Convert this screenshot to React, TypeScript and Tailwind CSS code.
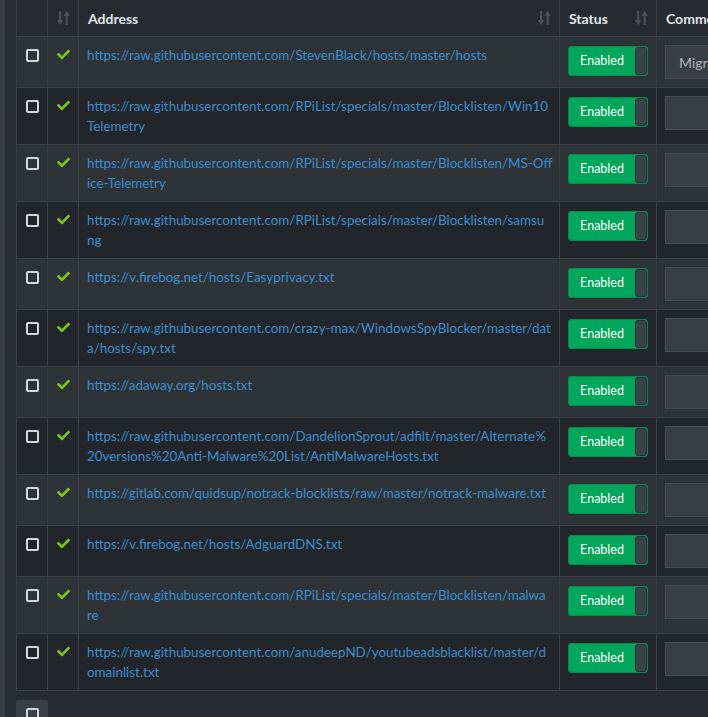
import React from "react";
import { FaCheck } from "react-icons/fa";

type Row = { lines: string[]; comment?: string };

const rows: Row[] = [
  { lines: ["https://raw.githubusercontent.com/StevenBlack/hosts/master/hosts"], comment: "Migrated from /etc/pihole/adlists.list" },
  { lines: ["https://raw.githubusercontent.com/RPiList/specials/master/Blocklisten/Win10", "Telemetry"] },
  { lines: ["https://raw.githubusercontent.com/RPiList/specials/master/Blocklisten/MS-Off", "ice-Telemetry"] },
  { lines: ["https://raw.githubusercontent.com/RPiList/specials/master/Blocklisten/samsu", "ng"] },
  { lines: ["https://v.firebog.net/hosts/Easyprivacy.txt"] },
  { lines: ["https://raw.githubusercontent.com/crazy-max/WindowsSpyBlocker/master/dat", "a/hosts/spy.txt"] },
  { lines: ["https://adaway.org/hosts.txt"] },
  { lines: ["https://raw.githubusercontent.com/DandelionSprout/adfilt/master/Alternate%", "20versions%20Anti-Malware%20List/AntiMalwareHosts.txt"] },
  { lines: ["https://gitlab.com/quidsup/notrack-blocklists/raw/master/notrack-malware.txt"] },
  { lines: ["https://v.firebog.net/hosts/AdguardDNS.txt"] },
  { lines: ["https://raw.githubusercontent.com/RPiList/specials/master/Blocklisten/malwa", "re"] },
  { lines: ["https://raw.githubusercontent.com/anudeepND/youtubeadsblacklist/master/d", "omainlist.txt"] },
];

const cols = "grid grid-cols-[31px_31px_481px_97px_200px]";
const cell = "border-r border-[#3a3f45]";

function SortIcon() {
  return (
    <svg width="13" height="16" viewBox="0 0 13 16" fill="#4b5158">
      <path d="M2 1h2.2v9H6.2L3.1 15 0 10h2z" />
      <path d="M10.8 15H8.6V6H6.6L9.7 1l3.1 5h-2z" />
    </svg>
  );
}

function Checkbox() {
  return <div className="w-[13px] h-[13px] border-2 border-[#d3d8dd] rounded-[2px]" />;
}

function Toggle() {
  return (
    <div className="mt-px flex h-[30px] w-[80px] rounded-[3px] border border-[#008d4c] bg-[#00a65a]">
      <div className="flex flex-1 items-center justify-center text-[12.5px] text-white">Enabled</div>
      <div className="h-full w-[12px] rounded-[3px] border border-[#2e3237] bg-[#3d4248]" />
    </div>
  );
}

export default function App() {
  return (
    <div className="flex h-[717px] w-[708px] overflow-hidden bg-[#272b30] font-['Lato','Liberation_Sans',sans-serif] text-[14px]">
      <div className="w-[5px] shrink-0 bg-[#383d43]" />
      <div className="w-[11px] shrink-0 bg-[#2a2e33]" />
      <div className="shrink-0">
        <div className="border-l border-b border-[#3a3f45]">
          <div className={`${cols} h-[37px] border-b border-[#3a3f45] bg-[#272b30] font-bold text-[#e1e6eb]`}>
            <div className={cell} />
            <div className={`${cell} flex items-center justify-center`}>
              <SortIcon />
            </div>
            <div className={`${cell} flex items-center justify-between pl-[9px] pr-[8px]`}>
              <span>Address</span>
              <SortIcon />
            </div>
            <div className={`${cell} flex items-center justify-between pl-[9px] pr-[8px]`}>
              <span>Status</span>
              <SortIcon />
            </div>
            <div className="flex items-center pl-[9px]">
              <span>Comment</span>
            </div>
          </div>

          {rows.map((r, i) => (
            <div
              key={i}
              className={`${cols} border-b border-[#3a3f45] ${i % 2 === 0 ? "bg-[#2e3338]" : "bg-[#222529]"} ${i === rows.length - 1 ? "border-b-0" : ""}`}
            >
              <div className={`${cell} flex justify-center pt-[12px]`}>
                <Checkbox />
              </div>
              <div className={`${cell} flex justify-center pt-[11px]`}>
                <FaCheck className="h-[13px] w-[15px] text-[#79c61a]" />
              </div>
              <div className={`${cell} py-[8px] pl-[8px] text-[13.4px] leading-[20px] text-[#3a8fd0]`}>
                {r.lines.map((l, j) => (
                  <div key={j} className="whitespace-nowrap">
                    {l}
                  </div>
                ))}
              </div>
              <div className={`${cell} py-[8px] pl-[8px]`}>
                <Toggle />
              </div>
              <div className="py-[8px] pl-[8px]">
                <div className="flex h-[34px] w-[190px] items-center overflow-hidden whitespace-nowrap border border-[#474c52] bg-[#393e44] pl-[13px] text-[#aeb5bd]">
                  {r.comment ?? ""}
                </div>
              </div>
            </div>
          ))}
        </div>

        <div className="pt-[9px]">
          <div className="flex h-[30px] w-[32px] justify-center rounded-[3px] bg-[#3a3f45] pt-[8px]">
            <Checkbox />
          </div>
        </div>
      </div>
    </div>
  );
}
